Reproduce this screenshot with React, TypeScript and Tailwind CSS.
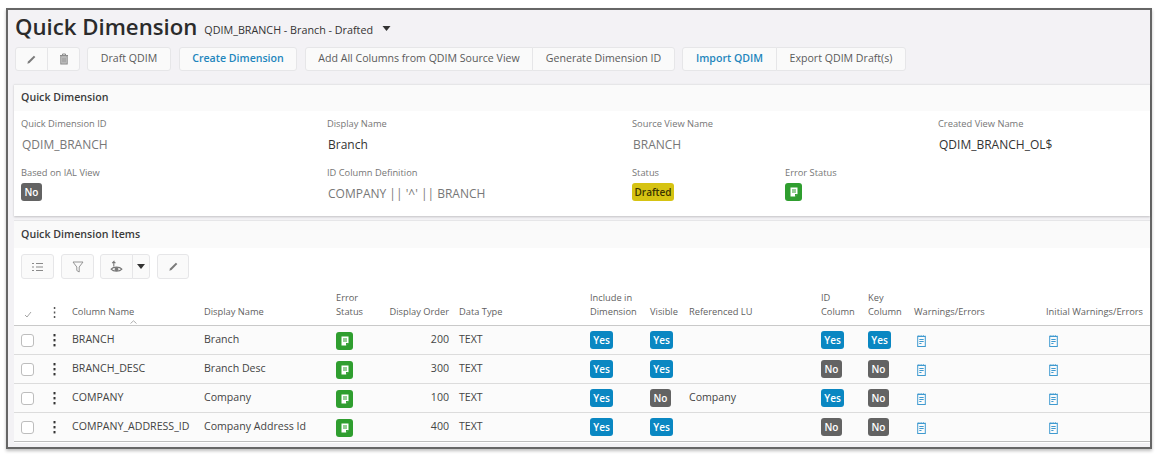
import React from "react";

const Pencil = () => (
  <svg width="11" height="11" viewBox="0 0 12 12" fill="none"><path d="M1.5 10.5 L2.2 8.2 L8.6 1.8 L10.2 3.4 L3.8 9.8 Z" fill="#7a7a7a" /></svg>
);
const Trash = () => (
  <svg width="10" height="12" viewBox="0 0 10 12" fill="none" stroke="#8a8a8a" strokeWidth="1"><path d="M1 2.5h8M3.5 2.5V1h3v1.5" /><rect x="1.8" y="2.8" width="6.4" height="8.2" fill="#c9c9c9" /><path d="M4 4.5v5M6 4.5v5" /></svg>
);
const ListIcon = () => (
  <svg width="11" height="10" viewBox="0 0 11 10" stroke="#8a8a8a" strokeWidth="1"><path d="M0 1.5h2M4 1.5h7M0 5h2M4 5h7M0 8.5h2M4 8.5h7" /></svg>
);
const FilterIcon = () => (
  <svg width="12" height="12" viewBox="0 0 12 12" fill="none" stroke="#8a8a8a" strokeWidth="0.9"><path d="M1 1h10L7.2 6v5L4.8 9.5V6Z" /></svg>
);
const EyeIcon = () => (
  <svg width="13" height="14" viewBox="0 0 12 13" fill="none" stroke="#777" strokeWidth="1"><path d="M1 8.5C3 6 9 6 11 8.5C9 11 3 11 1 8.5Z" /><circle cx="6" cy="8.5" r="1.3" fill="#777" /><path d="M3.5 6V1.5L2 3M3.5 1.5 5 3" /></svg>
);
const Caret = ({ w = 8, h = 5 }: { w?: number; h?: number }) => (
  <svg width={w} height={h} viewBox="0 0 8 5"><path d="M0 0h8L4 5Z" fill="#333" /></svg>
);
const Dots = ({ big }: { big?: boolean }) => (
  <svg width="3" height={big ? 13 : 11} viewBox={big ? "0 0 3 13" : "0 0 3 11"} fill={big ? "#333" : "#555"}>
    {big ? (
      <>
        <rect x="0.5" y="0" width="2" height="2.4" />
        <rect x="0.5" y="5" width="2" height="2.4" />
        <rect x="0.5" y="10" width="2" height="2.4" />
      </>
    ) : (
      <>
        <rect x="0.8" y="0" width="1.5" height="2" />
        <rect x="0.8" y="4.5" width="1.5" height="2" />
        <rect x="0.8" y="9" width="1.5" height="2" />
      </>
    )}
  </svg>
);
const GreenDoc = () => (
  <span className="inline-flex h-[18px] w-[17px] items-center justify-center rounded-[3px] bg-[#2f9e2f]">
    <svg width="8" height="10" viewBox="0 0 8 10"><path d="M0.5 0.5h7v6.5L5 9.5H0.5Z" fill="#fff" /><path d="M2 3h4M2 5h4" stroke="#2f9e2f" strokeWidth="1" /><path d="M5 9.5V7h2.5" fill="#2f9e2f" /></svg>
  </span>
);
const BlueDoc = () => (
  <svg width="9" height="12" viewBox="0 0 9 12" fill="none" stroke="#3f9ad0" strokeWidth="1"><rect x="0.7" y="1.5" width="7.6" height="10" /><path d="M0.7 1h7.6" strokeDasharray="1 0.8" strokeWidth="1.4" /><path d="M2.3 4.5h4.4M2.3 6.5h4.4M2.3 8.5h2.2" /></svg>
);
const Badge = ({ v }: { v: string }) =>
  v === "Yes" ? (
    <span className="inline-flex h-[18px] w-[23px] items-center justify-center rounded-[3px] bg-[#0a87c2] text-[10px] font-semibold text-white">Yes</span>
  ) : (
    <span className="inline-flex h-[18px] w-[21px] items-center justify-center rounded-[3px] bg-[#636363] text-[10px] font-semibold text-white">No</span>
  );

const btn = "flex h-[24px] items-center justify-center whitespace-nowrap border border-[#e6e6e8] bg-[#fafafa] text-[10.6px] text-[#5a5a5a]";
const btnBlue = "flex h-[24px] items-center justify-center whitespace-nowrap border border-[#e6e6e8] bg-[#fafafa] text-[10.6px] font-semibold text-[#1f86bd]";
const tool = "flex h-[25px] items-center justify-center border border-[#e6e6e8] bg-[#fafafa]";
const label = "text-[9.3px] leading-[14px] text-[#767676]";

const Field = ({ name, value, dark }: { name: string; value: string; dark?: boolean }) => (
  <div>
    <div className={label}>{name}</div>
    <div className={`mt-[6px] pl-px text-[12px] leading-[16px] ${dark ? "text-[#333]" : "text-[#777]"}`}>{value}</div>
  </div>
);

const cols = "grid grid-cols-[35px_23px_132px_132px_44px_69px_10px_131px_60px_39px_132px_47px_46px_132px_1fr]";
const formCols = "grid grid-cols-[306px_305px_306px_1fr]";
const rows = [
  ["BRANCH", "Branch", "200", "Yes", "Yes", "", "Yes", "Yes"],
  ["BRANCH_DESC", "Branch Desc", "300", "Yes", "Yes", "", "No", "No"],
  ["COMPANY", "Company", "100", "Yes", "No", "Company", "Yes", "No"],
  ["COMPANY_ADDRESS_ID", "Company Address Id", "400", "Yes", "Yes", "", "No", "No"],
];
const th = "text-[9.3px] leading-[14px] text-[#5f5f5f]";

export default function App() {
  return (
    <div className="h-[455px] w-[1157px] bg-white pl-[6px] pt-[8px]" style={{ fontFamily: '"Open Sans", sans-serif' }}>
      <div className="flex h-[441px] w-[1146px] flex-col border-2 border-[#666] bg-[#f3f2f5] pl-[6px] shadow-[0_2px_3px_rgba(0,0,0,0.25)]">
        <div className="flex h-[32px] items-center pl-[1px] pt-[2px]">
          <span className="text-[22.2px] font-semibold leading-[30px] text-[#2b2b2b]">Quick Dimension</span>
          <span className="ml-[7px] mt-[7px] text-[10.75px] font-medium text-[#333]">QDIM_BRANCH - Branch - Drafted</span>
          <span className="ml-[9px] mt-[2px]"><Caret w={9} h={5} /></span>
        </div>
        <div className="mt-[5px] flex h-[24px] pl-[1px]">
          <div className={`${btn} w-[33px] rounded-l-[3px]`}><Pencil /></div>
          <div className={`${btn} -ml-px w-[33px] rounded-r-[3px]`}><Trash /></div>
          <div className={`${btn} ml-[7px] w-[84px] rounded-[3px]`}>Draft QDIM</div>
          <div className={`${btnBlue} ml-[8px] w-[118px] rounded-[3px]`}>Create Dimension</div>
          <div className={`${btn} ml-[8px] w-[228px] rounded-l-[3px]`}>Add All Columns from QDIM Source View</div>
          <div className={`${btn} -ml-px w-[143px] rounded-r-[3px]`}>Generate Dimension ID</div>
          <div className={`${btnBlue} ml-[7px] w-[95px] rounded-l-[3px]`}>Import QDIM</div>
          <div className={`${btn} -ml-px w-[130px] rounded-r-[3px]`}>Export QDIM Draft(s)</div>
        </div>

        <section className="mt-[13px] h-[132px] border-t border-[#e6e6e8] bg-white shadow-[0_1px_2px_rgba(0,0,0,0.2)]">
          <div className="flex h-[26px] items-center bg-[#fafafa] pl-[7px] text-[10.65px] font-semibold text-[#3a3a3a]">Quick Dimension</div>
          <div className={`${formCols} pl-[7px] pt-[6px]`}>
            <Field name="Quick Dimension ID" value="QDIM_BRANCH" />
            <Field name="Display Name" value="Branch" dark />
            <Field name="Source View Name" value="BRANCH" />
            <Field name="Created View Name" value="QDIM_BRANCH_OL$" dark />
          </div>
          <div className={`${formCols} pl-[7px] pt-[13px]`}>
            <div>
              <div className={label}>Based on IAL View</div>
              <div className="mt-[3px] flex"><Badge v="No" /></div>
            </div>
            <div>
              <div className={label}>ID Column Definition</div>
              <div className="mt-[6px] pl-px text-[12px] leading-[16px] text-[#777]">COMPANY || '^' || BRANCH</div>
            </div>
            <div className="flex">
              <div className="w-[153px]">
                <div className={label}>Status</div>
                <div className="mt-[3px] flex">
                  <span className="inline-flex h-[18px] w-[42px] items-center justify-center rounded-[3px] bg-[#d6c312] text-[10px] font-semibold text-[#3a3300]">Drafted</span>
                </div>
              </div>
              <div>
                <div className={label}>Error Status</div>
                <div className="mt-[3px] flex"><GreenDoc /></div>
              </div>
            </div>
          </div>
        </section>

        <section className="mt-[4px] flex h-[223px] flex-col border-t border-[#e6e6e8] bg-white">
          <div className="flex h-[27px] shrink-0 items-center bg-[#fafafa] pl-[7px] text-[10.65px] font-semibold text-[#3a3a3a]">Quick Dimension Items</div>
          <div className="mt-[6px] flex h-[25px] shrink-0 pl-[7px]">
            <div className={`${tool} w-[33px] rounded-[3px]`}><ListIcon /></div>
            <div className={`${tool} ml-[7px] w-[33px] rounded-[3px]`}><FilterIcon /></div>
            <div className={`${tool} ml-[6px] w-[33px] rounded-l-[3px]`}><EyeIcon /></div>
            <div className={`${tool} -ml-px w-[18px] rounded-r-[3px]`}><Caret /></div>
            <div className={`${tool} ml-[7px] w-[32px] rounded-[3px]`}><Pencil /></div>
          </div>
          <div className={`${cols} h-[47px] shrink-0 items-end border-b border-[#c9c9c9] pb-[6px] ${th}`}>
            <div className="flex justify-center pb-[1px] pr-[8px]">
              <svg width="8" height="7" viewBox="0 0 8 7" fill="none" stroke="#9a9a9a" strokeWidth="0.9"><path d="M1 4 3 6 7 1" /></svg>
            </div>
            <div className="flex pb-[1px] pl-[4px]"><Dots /></div>
            <div className="relative">
              Column Name
              <svg className="absolute left-[58px] top-[15px]" width="7" height="4" viewBox="0 0 7 4" fill="none" stroke="#9a9a9a" strokeWidth="0.8"><path d="M0.5 3.5 3.5 0.8 6.5 3.5" /></svg>
            </div>
            <div>Display Name</div>
            <div>Error<br />Status</div>
            <div className="whitespace-nowrap text-right">Display Order</div>
            <div />
            <div>Data Type</div>
            <div>Include in<br />Dimension</div>
            <div>Visible</div>
            <div>Referenced LU</div>
            <div>ID<br />Column</div>
            <div>Key<br />Column</div>
            <div>Warnings/Errors</div>
            <div className="whitespace-nowrap">Initial Warnings/Errors</div>
          </div>
          {rows.map((r, i) => (
            <div key={r[0]} className={`${cols} h-[29px] shrink-0 items-center border-b bg-[#fbfbfb] text-[10.6px] text-[#444] ${i === 3 ? "border-[#bdbdbd]" : "border-[#dcdcdc]"}`}>
              <div className="pl-[7px]"><div className="h-[13px] w-[13px] rounded-[3px] border border-[#bdbdbd] bg-white" /></div>
              <div className="flex pl-[4px]"><Dots big /></div>
              <div className="whitespace-nowrap">{r[0]}</div>
              <div className="whitespace-nowrap">{r[1]}</div>
              <div className="flex pt-[1px]"><GreenDoc /></div>
              <div className="text-right">{r[2]}</div>
              <div />
              <div>TEXT</div>
              <div className="flex"><Badge v={r[3]} /></div>
              <div className="flex"><Badge v={r[4]} /></div>
              <div>{r[5]}</div>
              <div className="flex"><Badge v={r[6]} /></div>
              <div className="flex"><Badge v={r[7]} /></div>
              <div className="flex pl-[3px] pt-[2px]"><BlueDoc /></div>
              <div className="flex pl-[3px] pt-[2px]"><BlueDoc /></div>
            </div>
          ))}
        </section>
      </div>
    </div>
  );
}
